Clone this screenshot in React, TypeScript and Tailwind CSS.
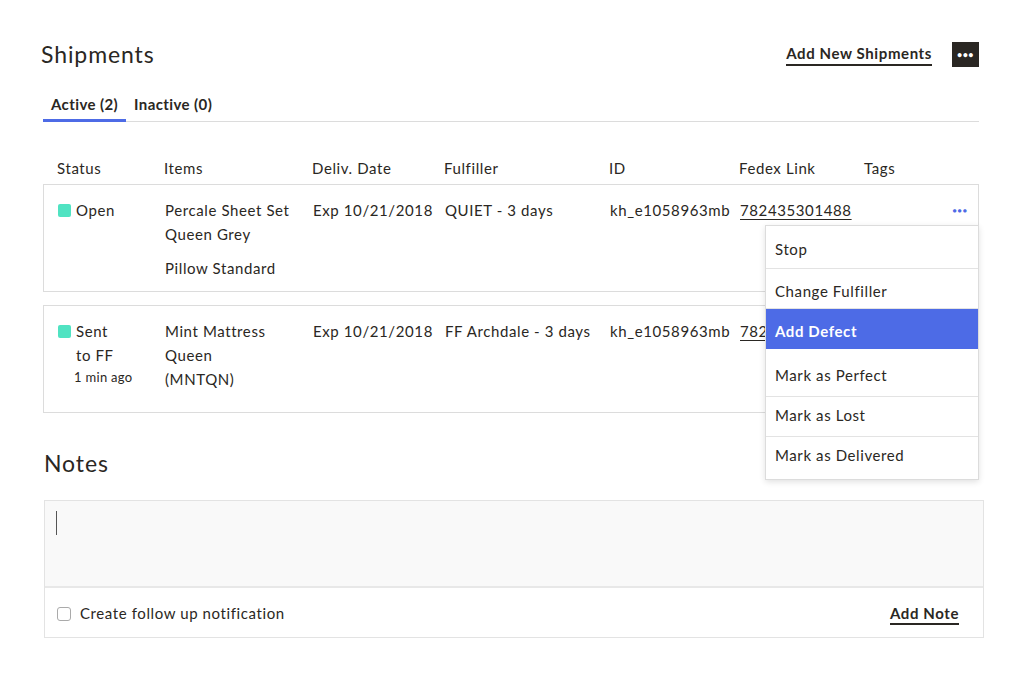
import React from "react";

const cols = "grid grid-cols-[107px_148px_132px_165px_130px_125px_1fr]";

function Status({ lines, sub }: { lines: string[]; sub?: string }) {
  return (
    <div className="flex items-start gap-[5px]">
      <span className="mt-[6px] h-[13px] w-[13px] shrink-0 rounded-[2px] bg-[#50e3c2]" />
      <div>
        {lines.map((l) => (
          <div key={l} className="leading-[24px]">
            {l}
          </div>
        ))}
        {sub && <div className="-ml-[2px] text-[13px] leading-[20px] tracking-[0.3px]">{sub}</div>}
      </div>
    </div>
  );
}

const menu = [
  { label: "Stop", h: "h-[43px] pt-[13px]" },
  { label: "Change Fulfiller", h: "h-[40px] pt-[12px]" },
  { label: "Add Defect", h: "h-[40px] pt-[12px]", active: true },
  { label: "Mark as Perfect", h: "h-[48px] pt-[16px]" },
  { label: "Mark as Lost", h: "h-[40px] pt-[8px]" },
  { label: "Mark as Delivered", h: "h-[42px] pt-[8px]" },
];

export default function App() {
  return (
    <div
      className="min-h-[697px] bg-white pl-[43px] pr-[45px] pt-[40px] text-[15px] tracking-[0.6px] text-[#2a2723]"
      style={{ fontFamily: "Lato, 'Open Sans', sans-serif" }}
    >
      {/* Header */}
      <div className="flex items-center justify-between">
        <h1 className="-ml-[2px] text-[23px] leading-[28px] tracking-[0.9px]">Shipments</h1>
        <div className="flex items-center gap-[20px]">
          <button className="border-b-2 border-[#2a2723] pb-[1px] text-[15px] font-bold leading-[20px] tracking-[0.6px]">
            Add New Shipments
          </button>
          <button className="flex h-[25px] w-[27px] items-center justify-center bg-[#2a2723] text-[9px] font-bold leading-none tracking-[0.5px] text-white">
            •••
          </button>
        </div>
      </div>

      {/* Tabs */}
      <div className="mt-[26px] flex border-b border-[#dcdcdc]">
        <div className="-mb-px border-b-[3px] border-[#4d6be6] px-[8px] pb-[5px] font-bold leading-[20px] tracking-[0.4px]">
          Active (2)
        </div>
        <div className="px-[8px] pb-[5px] font-bold leading-[20px] tracking-[0.4px]">Inactive (0)</div>
      </div>

      {/* Table */}
      <div className={`${cols} mt-[36px] h-[26px] px-[14px] leading-[20px]`}>
        <div>Status</div>
        <div>Items</div>
        <div>Deliv. Date</div>
        <div>Fulfiller</div>
        <div>ID</div>
        <div>Fedex Link</div>
        <div>Tags</div>
      </div>

      <div className="relative">
        <div className={`${cols} h-[108px] border border-[#dcdcdc] px-[14px] pt-[13px]`}>
          <Status lines={["Open"]} />
          <div>
            <div className="leading-[24px]">Percale Sheet Set</div>
            <div className="leading-[24px]">Queen Grey</div>
            <div className="mt-[10px] leading-[24px]">Pillow Standard</div>
          </div>
          <div className="leading-[24px]">Exp 10/21/2018</div>
          <div className="leading-[24px]">QUIET - 3 days</div>
          <div className="leading-[24px]">kh_e1058963mb</div>
          <div className="leading-[24px]">
            <span className="underline underline-offset-[3px]">782435301488</span>
          </div>
          <div className="flex justify-end leading-[24px]">
            <span className="-mr-[4px] text-[7px] tracking-[1px] text-[#4d6be6]">●●●</span>
          </div>
        </div>

        {/* Dropdown */}
        <div className="absolute right-0 top-[41px] z-10 w-[214px] border border-[#dcdcdc] bg-white shadow-[0_2px_6px_rgba(0,0,0,0.12)]">
          {menu.map((m, i) => (
            <div
              key={m.label}
              className={`${m.h} px-[9px] leading-[20px] ${
                m.active ? "bg-[#4d6be6] font-bold text-white" : ""
              } ${i < menu.length - 1 && !m.active ? "border-b border-[#e3e3e3]" : ""}`}
            >
              {m.label}
            </div>
          ))}
        </div>

        <div className={`${cols} mt-[13px] h-[108px] border border-[#dcdcdc] px-[14px] pt-[13px]`}>
          <Status lines={["Sent", "to FF"]} sub="1 min ago" />
          <div>
            <div className="leading-[24px]">Mint Mattress</div>
            <div className="leading-[24px]">Queen</div>
            <div className="leading-[24px]">(MNTQN)</div>
          </div>
          <div className="leading-[24px]">Exp 10/21/2018</div>
          <div className="leading-[24px]">FF Archdale - 3 days</div>
          <div className="leading-[24px]">kh_e1058963mb</div>
          <div className="leading-[24px]">
            <span className="underline underline-offset-[3px]">782435301488</span>
          </div>
          <div />
        </div>
      </div>

      {/* Notes */}
      <h2 className="mt-[36px] ml-[1px] text-[23px] leading-[28px] tracking-[0.9px]">Notes</h2>
      <div className="mt-[23px] ml-[1px] w-[940px] border border-[#e3e3e3]">
        <div className="h-[87px] border-b-2 border-[#e8e8e8] bg-[#f9f9f9] px-[11px] pt-[10px]">
          <div className="h-[24px] w-px bg-[#555]" />
        </div>
        <div className="flex h-[49px] items-center justify-between pl-[12px] pr-[24px] pt-[2px]">
          <label className="flex items-center gap-[9px]">
            <span className="h-[14px] w-[14px] rounded-[3px] border border-[#aaa] bg-white" />
            <span>Create follow up notification</span>
          </label>
          <button className="border-b-2 border-[#2a2723] text-[15px] font-bold leading-[20px] tracking-[0.6px]">
            Add Note
          </button>
        </div>
      </div>
    </div>
  );
}
